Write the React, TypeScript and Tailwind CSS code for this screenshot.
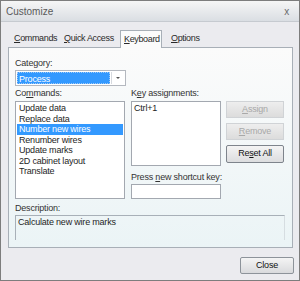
const U = ({ children }: { children: string }) => <span className="underline">{children}</span>;

const commands = [
  "Update data",
  "Replace data",
  "Number new wires",
  "Renumber wires",
  "Update marks",
  "2D cabinet layout",
  "Translate",
];

export default function App() {
  return (
    <div
      className="w-[300px] h-[281px] flex flex-col bg-[#ebebef] border border-[#7d7d7d] text-[9px] tracking-[-0.2px] text-[#1e1e1e] whitespace-nowrap"
      style={{ fontFamily: '"Liberation Sans", Arial, sans-serif' }}
    >
      {/* title bar */}
      <div className="h-[21px] shrink-0 flex items-center justify-between pl-[5px] pr-[10px] bg-gradient-to-b from-[#f6f6f6] to-[#dadee3] border-b border-[#c6cad0]">
        <span className="text-[10px] tracking-normal text-[#5a5a5a]">Customize</span>
        <span className="text-[10px] text-[#6a6a6a]">x</span>
      </div>

      <div className="flex flex-col px-[7px]">
        {/* tabs */}
        <div className="flex items-end h-[25px] text-[#2a2a2a] tracking-[-0.35px]">
          <div className="w-[50px] h-[17px] pl-[6px] leading-[17px]">
            <U>C</U>ommands
          </div>
          <div className="w-[62px] h-[17px] pl-[6px] leading-[17px]">
            <U>Q</U>uick Access
          </div>
          <div className="relative z-10 -mb-px w-[42px] h-[18px] px-[3px] leading-[17px] bg-[#fbfbfb] border border-b-0 border-[#a8afb7]">
            <U>K</U>eyboard
          </div>
          <div className="h-[17px] pl-[9px] leading-[17px]">
            <U>O</U>ptions
          </div>
        </div>

        {/* panel */}
        <div className="w-[285px] h-[201px] flex flex-col pl-[6px] pt-[10px] border border-[#a8afb7] bg-gradient-to-b from-[#fbfbfb] to-[#ebf4f6]">
          <div className="h-[11px] leading-[11px] text-[#333]">
            Cate<U>g</U>ory:
          </div>
          <div className="mt-[1px] w-[111px] h-[16px] flex items-center border border-[#b4b8bf] bg-white p-[1px]">
            <div className="flex-1 h-full leading-[12px] pl-[1px] bg-[#3399ff] text-white border border-dotted border-[#9fc8f5]">
              Process
            </div>
            <div className="w-[13px] h-full flex items-center justify-center ml-[1px] border-l border-[#d6d9de]">
              <div className="w-0 h-0 border-l-[2px] border-r-[2px] border-t-[2px] border-l-transparent border-r-transparent border-t-[#555]" />
            </div>
          </div>

          <div className="mt-[2px] flex">
            {/* commands */}
            <div className="w-[110px] flex flex-col">
              <div className="h-[11px] leading-[11px] text-[#333]">
                Co<U>m</U>mands:
              </div>
              <div className="mt-[2px] h-[98px] border border-[#a3a8b0] bg-white pt-[1px] px-[1px]">
                {commands.map((c, i) => (
                  <div
                    key={c}
                    className={
                      i === 2
                        ? "h-[10.5px] leading-[10.5px] pl-[2px] bg-[#3399ff] text-white"
                        : "h-[10.5px] leading-[10.5px] pl-[2px]"
                    }
                  >
                    {c}
                  </div>
                ))}
              </div>
            </div>

            {/* key assignments */}
            <div className="ml-[6px] w-[90px] flex flex-col">
              <div className="h-[11px] leading-[11px] text-[#333]">
                K<U>e</U>y assignments:
              </div>
              <div className="mt-[2px] h-[65px] border border-[#a3a8b0] bg-white pt-[1px] pl-[2px] leading-[10.5px]">
                Ctrl+1
              </div>
              <div className="mt-[6px] h-[11px] leading-[11px] text-[#333]">
                Press <U>n</U>ew shortcut key:
              </div>
              <div className="mt-[1px] h-[15px] border border-[#a3a8b0] bg-white" />
            </div>

            {/* buttons */}
            <div className="ml-[5px] mt-[13px] w-[58px] flex flex-col gap-[5px]">
              <div className="h-[17px] flex items-center justify-center border border-[#d0d3d6] bg-gradient-to-b from-[#eeeeee] to-[#dcdcdc] text-[#a8a8a8]">
                <U>A</U>ssign
              </div>
              <div className="h-[17px] flex items-center justify-center border border-[#d0d3d6] bg-gradient-to-b from-[#eeeeee] to-[#dcdcdc] text-[#a8a8a8]">
                <U>R</U>emove
              </div>
              <div className="h-[18px] flex items-center justify-center border border-[#7e848c] rounded-[2px] bg-gradient-to-b from-[#f4f4f4] to-[#dcdddf] text-[#111]">
                Re<U>s</U>et All
              </div>
            </div>
          </div>

          <div className="mt-[4px] h-[11px] leading-[11px] text-[#333]">Description:</div>
          <div className="mt-[1px] w-[270px] h-[25px] border-t border-l border-[#a8b0b8] border-r border-r-[#d6dde1] pl-[2px] pt-[1px] leading-[10.5px]">
            Calculate new wire marks
          </div>
        </div>

        {/* footer */}
        <div className="flex justify-end mt-[9px] -mr-[2px]">
          <div className="w-[54px] h-[17px] flex items-center justify-center border border-[#8d939a] rounded-[2px] bg-gradient-to-b from-[#f4f4f4] to-[#d9dadd] text-[#111]">
            Close
          </div>
        </div>
      </div>
    </div>
  );
}
